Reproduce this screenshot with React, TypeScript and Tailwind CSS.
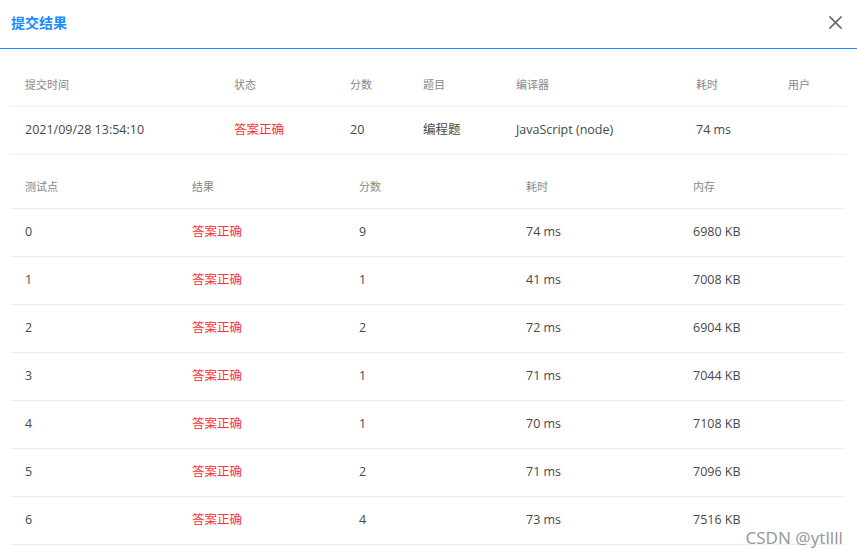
import React from 'react';

const FONT = { fontFamily: '"Open Sans", "Noto Sans CJK SC", sans-serif' };

const SUBMIT_COLS = ['w-[209px]', 'w-[116px]', 'w-[73px]', 'w-[93px]', 'w-[180px]', 'w-[92px]', 'flex-1'];

const SUBMIT_HEAD = ['提交时间', '状态', '分数', '题目', '编译器', '耗时', '用户'];

const CASES = [
  { id: 0, score: 9, time: '74 ms', mem: '6980 KB' },
  { id: 1, score: 1, time: '41 ms', mem: '7008 KB' },
  { id: 2, score: 2, time: '72 ms', mem: '6904 KB' },
  { id: 3, score: 1, time: '71 ms', mem: '7044 KB' },
  { id: 4, score: 1, time: '70 ms', mem: '7108 KB' },
  { id: 5, score: 2, time: '71 ms', mem: '7096 KB' },
  { id: 6, score: 4, time: '73 ms', mem: '7516 KB' },
];

const CASE_HEAD = ['测试点', '结果', '分数', '耗时', '内存'];

export default function App() {
  return (
    <div className="relative w-[857px] h-[556px] bg-white overflow-hidden" style={FONT}>
      <div className="flex items-center justify-between h-[49px] pl-[11px] pr-[14px] border-b border-[#1a8cff]">
        <span className="text-[14px] font-semibold text-[#1a8cff] pb-[4px]">提交结果</span>
        <svg width="15" height="15" viewBox="0 0 16 16" className="mb-[3px]">
          <path d="M2 2 L14 14 M14 2 L2 14" stroke="#666" strokeWidth="1.6" strokeLinecap="round" />
        </svg>
      </div>

      <div className="px-[11px] pt-[11px]">
        {/* submission summary */}
        <div className="w-[835px]">
          <div className="flex h-[47px] items-center pt-[4px] border-b border-[#ebeef5] text-[11px] text-[#888]">
            {SUBMIT_HEAD.map((h, i) => (
              <div key={h} className={`${SUBMIT_COLS[i]} pl-[14px]`}>
                {h}
              </div>
            ))}
          </div>
          <div className="flex h-[48px] items-center border-b border-[#ebeef5] text-[12.5px] text-[#484848]">
            <div className={`${SUBMIT_COLS[0]} pl-[14px]`}>2021/09/28 13:54:10</div>
            <div className={`${SUBMIT_COLS[1]} pl-[14px] text-[#f5363a]`}>答案正确</div>
            <div className={`${SUBMIT_COLS[2]} pl-[14px]`}>20</div>
            <div className={`${SUBMIT_COLS[3]} pl-[14px]`}>编程题</div>
            <div className={`${SUBMIT_COLS[4]} pl-[14px]`}>JavaScript (node)</div>
            <div className={`${SUBMIT_COLS[5]} pl-[14px]`}>74 ms</div>
            <div className={`${SUBMIT_COLS[6]} pl-[14px]`}></div>
          </div>
        </div>

        {/* test cases */}
        <div className="w-[835px] mt-[9px]">
          <div className="grid grid-cols-5 h-[45px] items-center pt-[2px] border-b border-[#ebeef5] text-[11px] text-[#888]">
            {CASE_HEAD.map((h) => (
              <div key={h} className="pl-[14px]">
                {h}
              </div>
            ))}
          </div>
          {CASES.map((c) => (
            <div
              key={c.id}
              className="grid grid-cols-5 h-[48px] items-center border-b border-[#ebeef5] text-[12.5px] text-[#484848]"
            >
              <div className="pl-[14px]">{c.id}</div>
              <div className="pl-[14px] text-[#f5363a]">答案正确</div>
              <div className="pl-[14px]">{c.score}</div>
              <div className="pl-[14px]">{c.time}</div>
              <div className="pl-[14px]">{c.mem}</div>
            </div>
          ))}
        </div>
      </div>

      <div
        className="absolute right-[14px] bottom-[10px] text-[17px] leading-none text-[#9a9a9a]"
        style={{ fontFamily: '"Noto Sans", sans-serif', textShadow: '0 0 2px #fff' }}
      >
        CSDN @ytllll
      </div>
    </div>
  );
}
